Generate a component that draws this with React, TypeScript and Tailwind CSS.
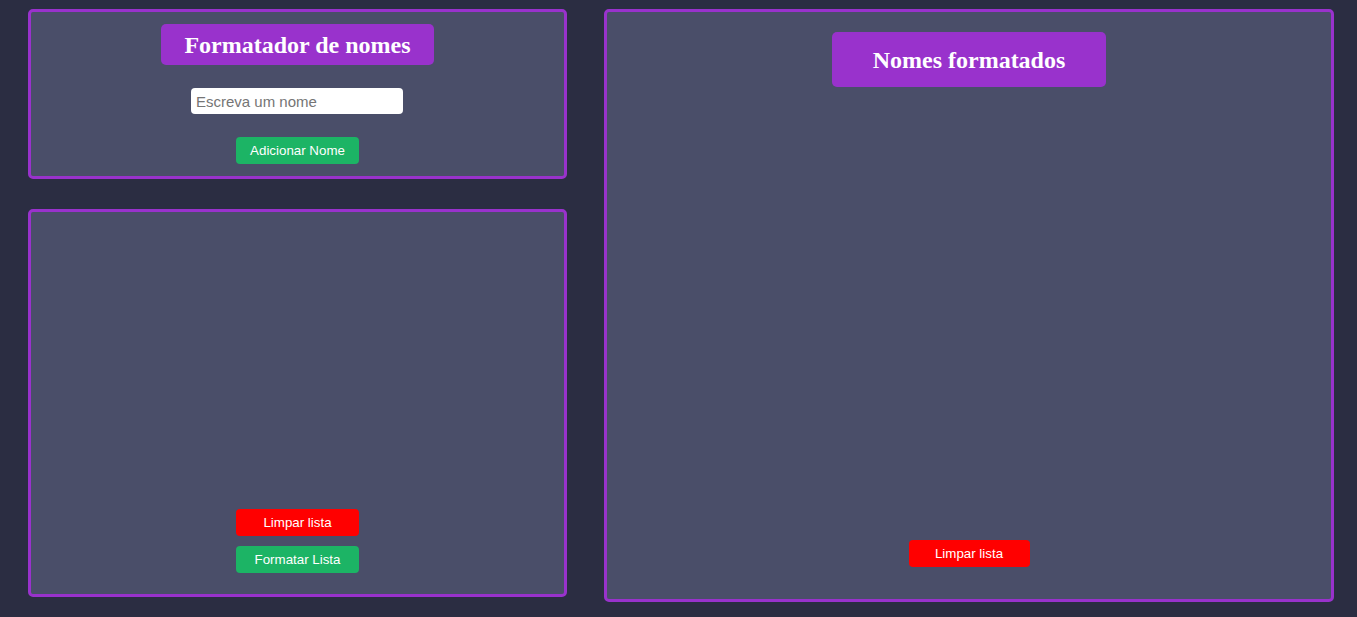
import { useState } from 'react';

const panel = 'rounded-[5px] border-[3px] border-[#9932cc] bg-[#4a4e69] flex flex-col items-center';
const title =
  'flex items-center justify-center rounded-[5px] bg-[#9932cc] text-white font-bold text-[24px] [font-family:"Liberation_Serif","Times_New_Roman",serif]';
const btn =
  'h-[27px] rounded-[4px] text-white text-[13.33px] [font-family:"Liberation_Sans",Arial,sans-serif] flex items-center justify-center';

export default function App() {
  const [name, setName] = useState('');

  return (
    <div className="min-h-[617px] bg-[#2b2d42] flex pt-[9px] pl-[28px]">
      <div className="w-[539px] flex flex-col gap-[30px]">
        <div className={`${panel} h-[170px]`}>
          <h1 className={`${title} mt-[12px] w-[273px] h-[41px]`}>Formatador de nomes</h1>
          <input
            value={name}
            onChange={(e) => setName(e.target.value)}
            placeholder="Escreva um nome"
            className='mt-[23px] mr-[1px] w-[212px] h-[26px] rounded-[4px] bg-white pl-[5px] text-[15px] text-black placeholder:text-[#757575] outline-none [font-family:"Liberation_Sans",Arial,sans-serif]'
          />
          <button className={`${btn} mt-[23px] w-[123px] bg-[#1cb465]`}>Adicionar Nome</button>
        </div>

        <div className={`${panel} h-[388px] justify-end pb-[21px] gap-[10px]`}>
          <button className={`${btn} w-[123px] bg-[#ff0000]`}>Limpar lista</button>
          <button className={`${btn} w-[123px] bg-[#1cb465]`}>Formatar Lista</button>
        </div>
      </div>

      <div className={`${panel} ml-[37px] w-[730px] h-[593px] justify-between pb-[32px]`}>
        <h2 className={`${title} mt-[20px] w-[274px] h-[55px]`}>Nomes formatados</h2>
        <button className={`${btn} w-[121px] bg-[#ff0000]`}>Limpar lista</button>
      </div>
    </div>
  );
}
